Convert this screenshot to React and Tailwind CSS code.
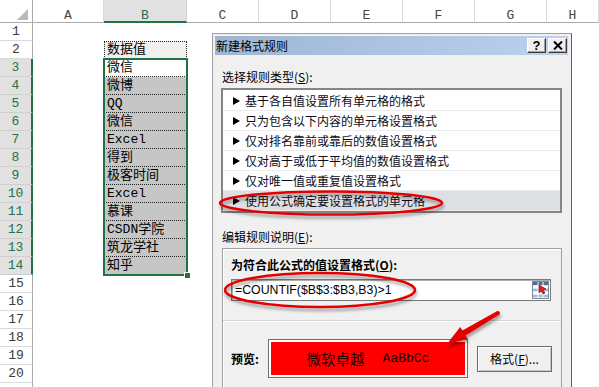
import React from "react";

const bVals = [
  "微信", "微博", "QQ", "微信", "Excel", "得到", "极客时间", "Excel", "慕课", "CSDN学院", "筑龙学社", "知乎",
];

const listItems = [
  "基于各自值设置所有单元格的格式",
  "只为包含以下内容的单元格设置格式",
  "仅对排名靠前或靠后的数值设置格式",
  "仅对高于或低于平均值的数值设置格式",
  "仅对唯一值或重复值设置格式",
  "使用公式确定要设置格式的单元格",
];

function ColHeader({ label, w, selected }) {
  return (
    <div
      className={
        selected
          ? "h-[23px] flex justify-center pt-[10px] leading-[12px] bg-[#e1e1e1] text-[#217346] border-b-2 border-b-[#217346] border-r border-r-[#d0d0d0]"
          : "h-[23px] flex justify-center pt-[10px] leading-[12px] bg-white text-[#444] border-b border-b-[#ababab] border-r border-r-[#dadada]"
      }
      style={w ? { width: w } : undefined}
    >
      {label}
    </div>
  );
}

function Sheet() {
  const rows = Array.from({ length: 20 }, (_, i) => i + 1);
  return (
    <div className="flex font-['Liberation_Mono','Noto_Sans_CJK_SC',monospace] text-[13px]">
      {/* row header column */}
      <div className="w-[33px] flex flex-col shrink-0">
        <div className="h-[23px] border-b border-b-[#ababab] border-r border-r-[#ababab] bg-white relative">
          <svg width="12" height="12" className="absolute left-[17px] top-[9px]">
            <polygon points="11,0 11,11 0,11" fill="#b9b9b9" />
          </svg>
        </div>
        {rows.map((r) => {
          const sel = r >= 3 && r <= 14;
          return (
            <div
              key={r}
              className={
                sel
                  ? "h-[18px] flex items-center justify-center pt-[1px] bg-[#e1e1e1] text-[#217346] border-b border-b-[#cfcfcf] border-r-2 border-r-[#217346]"
                  : "h-[18px] flex items-center justify-center pt-[1px] bg-white text-[#3c3c3c] border-b border-b-[#dadada] border-r border-r-[#ababab]"
              }
            >
              {r}
            </div>
          );
        })}
        <div className="h-[18px] bg-white border-r border-r-[#ababab]" />
      </div>
      {/* A */}
      <div className="w-[71px] flex flex-col shrink-0">
        <ColHeader label="A" />
      </div>
      {/* B */}
      <div className="w-[83px] flex flex-col shrink-0">
        <ColHeader label="B" selected />
        <div className="h-[18px]" />
        <div className="h-[18px] flex items-center pl-[2px] bg-[#f0f0f0] border border-dotted border-[#222] text-black">
          数据值
        </div>
        <div className="relative outline-2 outline-offset-[-1px] outline-[#217346]">
          {bVals.map((v, i) => (
            <div
              key={i}
              className={
                "h-[18px] flex items-center pl-[2px] text-black border-x border-x-white " +
                (i === 0 ? "bg-white " : "bg-[#c6c6c6] ") +
                (i === bVals.length - 1
                  ? "border-b border-b-white"
                  : "border-b border-dotted border-b-[#222]")
              }
            >
              {v}
            </div>
          ))}
          <div className="absolute right-[-4px] bottom-[-4px] w-[7px] h-[7px] bg-[#217346] border border-white" />
        </div>
      </div>
      {["C", "D", "E", "F", "G"].map((c) => (
        <div key={c} className="w-[72px] flex flex-col shrink-0">
          <ColHeader label={c} />
        </div>
      ))}
      <div className="flex-1 flex flex-col">
        <ColHeader label="H" />
      </div>
    </div>
  );
}

function TitleButton({ children }) {
  return (
    <div className="w-[19px] h-[15px] bg-[#f0f0f0] border border-t-white border-l-white border-r-[#3c3c3c] border-b-[#3c3c3c] shadow-[inset_-1px_-1px_0_#a0a0a0] flex items-center justify-center">
      {children}
    </div>
  );
}

function PickIcon() {
  return (
    <svg width="17" height="18" viewBox="0 0 17 18">
      <rect x="0.5" y="0.5" width="16" height="17" fill="#dbe6f4" stroke="#7d8a99" />
      <rect x="1" y="1" width="15" height="3" fill="#4a6d9c" />
      <rect x="1" y="5" width="15" height="2" fill="#ffffff" />
      <rect x="1" y="8" width="15" height="2" fill="#9fbbe0" />
      <rect x="1" y="11" width="15" height="2" fill="#ffffff" />
      <rect x="1" y="14" width="15" height="2" fill="#9fbbe0" />
      <line x1="6" y1="1" x2="6" y2="17" stroke="#ffffff" strokeWidth="1" />
      <line x1="11" y1="1" x2="11" y2="17" stroke="#ffffff" strokeWidth="1" />
      <polygon points="7,4 14,8 11,9 13,12 11,13 9,10 7,12" fill="#e02020" stroke="#8a0000" strokeWidth="0.6" />
    </svg>
  );
}

function Dialog() {
  return (
    <div className="absolute left-[212px] top-[33px] w-[360px] h-[370px] bg-[#f0f0f0] border border-[#a0a0a0] border-r-[#646464] pl-[2px] pt-[2px] pr-[3px] flex flex-col font-['Noto_Sans_CJK_SC','Liberation_Sans',sans-serif] text-[12px] leading-[16px] text-black">
      {/* title bar */}
      <div className="h-[19px] flex items-center bg-linear-to-r from-[#9db6d3] to-[#bad2ec] pl-[1px] pr-[1px]">
        <span className="flex-1 text-black">新建格式规则</span>
        <div className="flex gap-[2px]">
          <TitleButton>
            <span className="font-bold text-[13px] leading-[13px] font-['Liberation_Sans',sans-serif]">?</span>
          </TitleButton>
          <TitleButton>
            <svg width="10" height="9" viewBox="0 0 10 9">
              <path d="M1 0.5 L9 8.5 M9 0.5 L1 8.5" stroke="#000" strokeWidth="2" />
            </svg>
          </TitleButton>
        </div>
      </div>

      <div className="mt-[14px] pl-[7px]">
        选择规则类型(<span className="underline">S</span>):
      </div>

      <div className="mt-[3px] ml-[6px] w-[341px] h-[125px] bg-white border-2 border-[#858585] pt-[1px]">
        {listItems.map((t, i) => (
          <div
            key={i}
            className={
              "h-[20px] flex items-center pl-[10px] border-b border-b-[#ececec] " +
              (i === 5 ? "bg-[#dedfe3]" : "bg-white")
            }
          >
            <svg width="7" height="8" viewBox="0 0 7 8" className="mr-[5px] shrink-0">
              <polygon points="0,0 7,4 0,8" fill="#000" />
            </svg>
            <span className="text-[#0c0c18]">{t}</span>
          </div>
        ))}
      </div>

      <div className="mt-[16px] pl-[7px]">
        编辑规则说明(<span className="underline">E</span>):
      </div>

      <div className="mt-[3px] ml-[7px] w-[340px] flex-1 border border-[#a0a0a0] shadow-[inset_1px_1px_0_#ffffff] flex flex-col">
        <div className="px-[8px] pt-[8px] pb-[19px]">
          <div className="font-bold">
            为符合此公式的值设置格式(<span className="underline">O</span>):
          </div>
          <div className="mt-[6px] w-[320px] h-[22px] bg-white border border-[#7a7a7a] shadow-[inset_1px_1px_0_#b0b0b0] flex items-center">
            <span className="flex-1 pl-[3px] font-['Liberation_Sans',sans-serif] text-[12.3px] text-black">
              =COUNTIF($B$3:$B3,B3)&gt;1
            </span>
            <div className="mr-[1px] flex">
              <PickIcon />
            </div>
          </div>
        </div>
        <div className="h-px bg-[#d5d5d5] shadow-[0_1px_0_#ffffff]" />
        <div className="pl-[8px] pt-[18px] flex items-center">
          <div className="w-[37px] font-bold">预览:</div>
          <div className="w-[200px] h-[39px] bg-white border border-[#6f6f6f] p-[2px]">
            <div className="w-full h-full bg-[#ff0000] flex items-center justify-center text-[#1a0000]">
              <span className="text-[14.5px] font-['Noto_Sans_CJK_SC',sans-serif]">微软卓越</span>
              <span className="ml-[18px] text-[13px] font-['Liberation_Mono',monospace]">AaBbCc</span>
            </div>
          </div>
          <div className="ml-[9px] w-[75px] h-[26px] bg-[#f0f0f0] border border-[#6c6c6c] shadow-[inset_1px_1px_0_#ffffff,inset_-1px_-1px_0_#c8c8c8] flex items-center justify-center">
            格式(<span className="underline">F</span>)...
          </div>
        </div>
      </div>
    </div>
  );
}

function Annotations() {
  return (
    <svg className="absolute left-0 top-0 pointer-events-none" width="599" height="387" viewBox="0 0 599 387">
      <defs>
        <filter id="sh" x="-20%" y="-50%" width="140%" height="200%">
          <feDropShadow dx="1" dy="3" stdDeviation="1.5" floodColor="#000" floodOpacity="0.35" />
        </filter>
      </defs>
      <ellipse cx="331" cy="203" rx="111" ry="11.5" fill="none" stroke="#e20000" strokeWidth="2.5" filter="url(#sh)" />
      <ellipse cx="320" cy="290" rx="95" ry="17" fill="none" stroke="#e20000" strokeWidth="2.5" filter="url(#sh)" />
      <g filter="url(#sh)">
        <polygon
          points="496.9,311.3 462.4,330.5 460.2,327.1 447,344 467.8,338.9 465.6,335.5 499.1,314.7"
          fill="#e20000"
        />
        <circle cx="498" cy="313" r="2" fill="#e20000" />
      </g>
    </svg>
  );
}

export default function App() {
  return (
    <div className="relative w-[599px] h-[387px] overflow-hidden bg-white">
      <Sheet />
      <Dialog />
      <Annotations />
    </div>
  );
}
